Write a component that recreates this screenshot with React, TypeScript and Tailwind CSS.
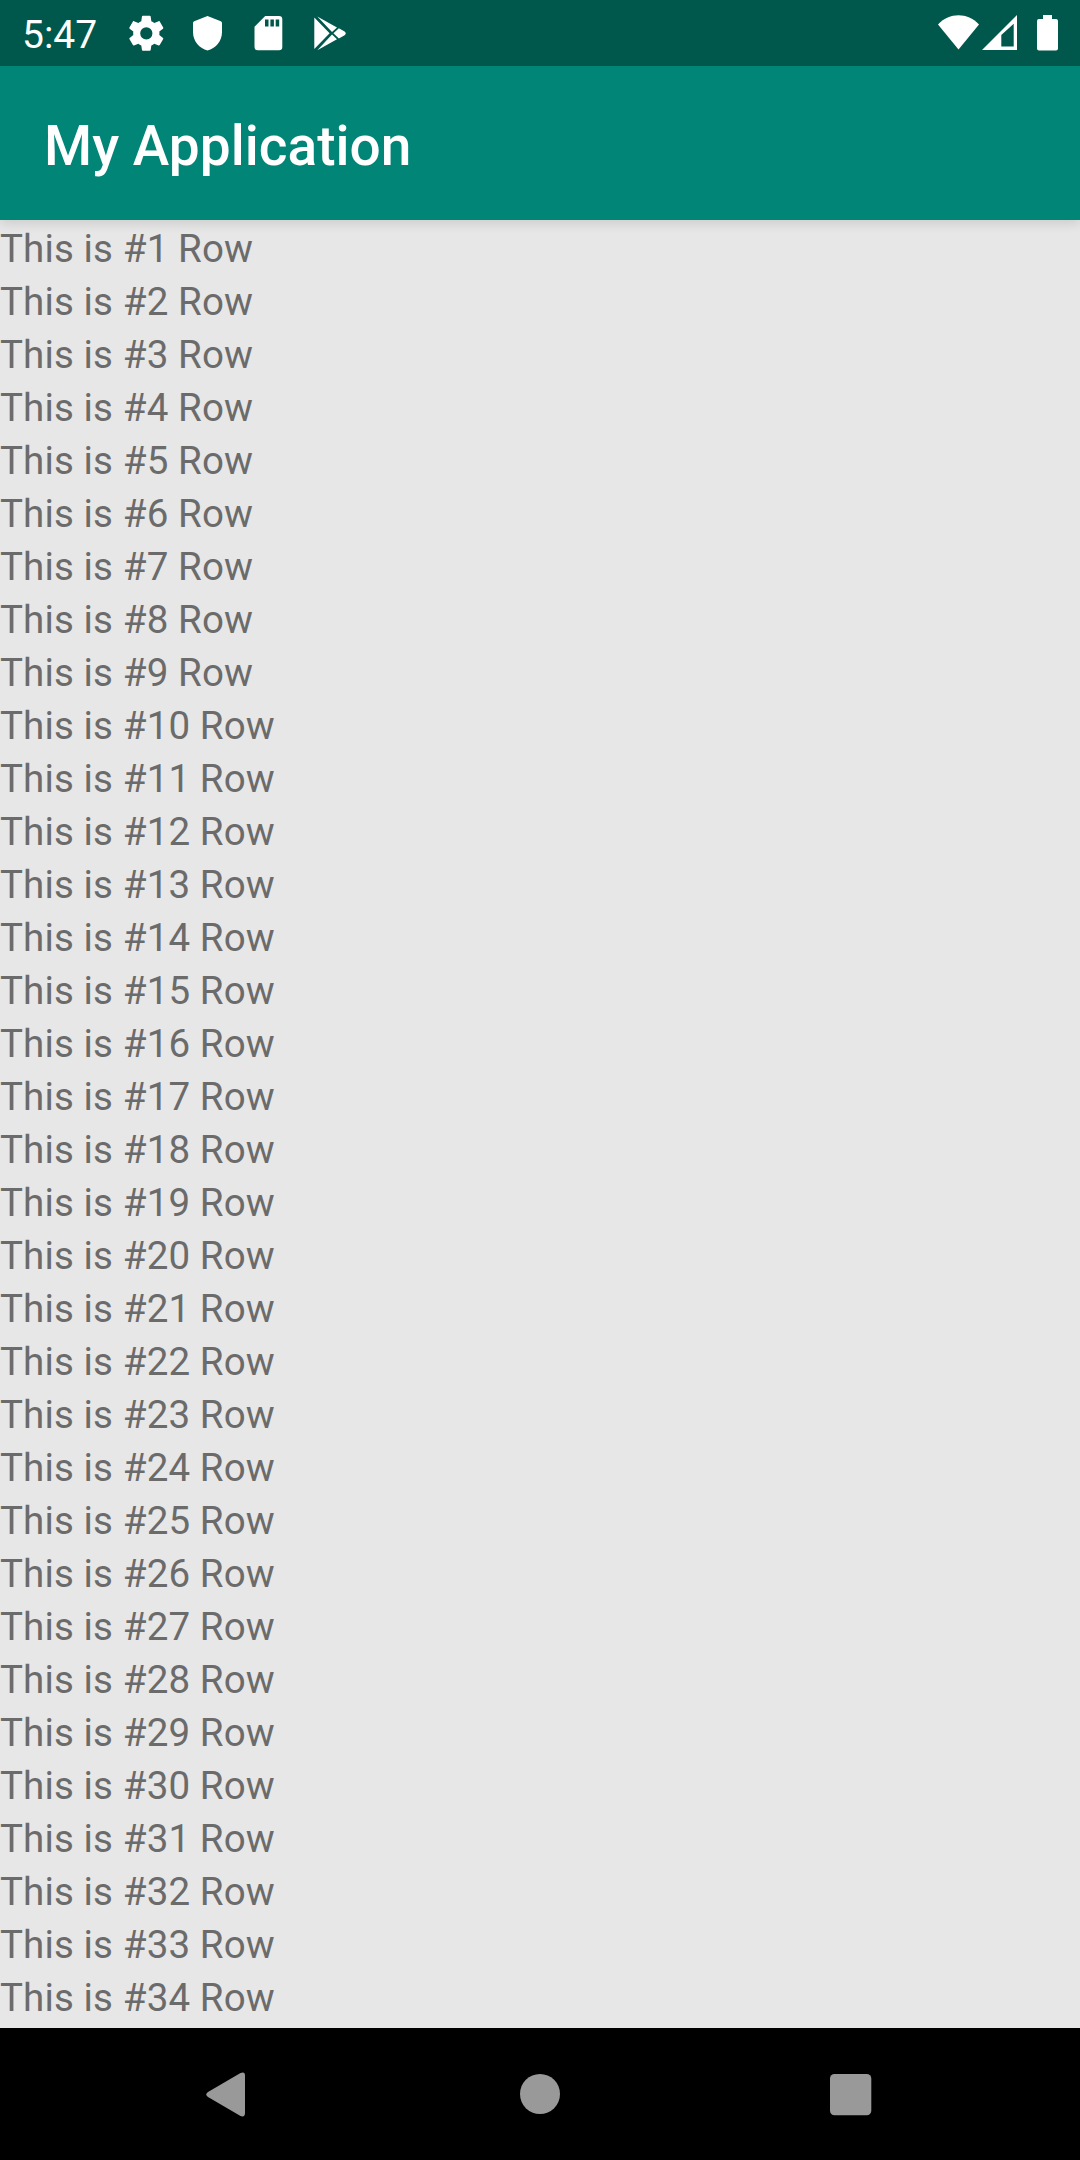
const rows = Array.from({ length: 34 }, (_, i) => i + 1);

function StatusBar() {
  return (
    <header className="z-20 flex h-[66px] shrink-0 items-center justify-between bg-[#00574b] pl-[22px] pr-[20px] text-white">
      <div className="flex items-center">
        <span className="w-[103px] pt-[4px] text-[39px] leading-[62px]">5:47</span>
        <div className="flex items-center gap-[19px]">
          <svg className="size-[42px]" viewBox="0 0 24 24" fill="currentColor">
            <path transform="translate(.18 .18)" d="M19.43 12.98c.04-.32.07-.64.07-.98s-.03-.66-.07-.98l2.11-1.65c.19-.15.24-.42.12-.64l-2-3.46c-.12-.22-.39-.3-.61-.22l-2.49 1c-.52-.4-1.08-.73-1.69-.98l-.38-2.65C14.46 2.18 14.25 2 14 2h-4c-.25 0-.46.18-.49.42l-.38 2.65c-.61.25-1.17.59-1.69.98l-2.49-1c-.23-.09-.49 0-.61.22l-2 3.46c-.13.22-.07.49.12.64l2.11 1.65c-.04.32-.07.65-.07.98s.03.66.07.98l-2.11 1.65c-.19.15-.24.42-.12.64l2 3.46c.12.22.39.3.61.22l2.49-1c.52.4 1.08.73 1.69.98l.38 2.65c.03.24.24.42.49.42h4c.25 0 .46-.18.49-.42l.38-2.65c.61-.25 1.17-.59 1.69-.98l2.49 1c.23.09.49 0 .61-.22l2-3.46c.12-.22.07-.49-.12-.64zM12 15.5a3.5 3.5 0 1 1 0-7 3.5 3.5 0 0 1 0 7z" />
          </svg>
          <svg className="size-[42px]" viewBox="0 0 42 42" fill="currentColor">
            <path d="M21.5 4 34.8 9.2Q36 9.7 36 11V20C36 29.5 29.5 36.5 21.5 38.5 13.5 36.5 7 29.5 7 20V11Q7 9.7 8.2 9.2Z" />
          </svg>
          <svg className="size-[42px]" viewBox="0 0 42 42" fill="currentColor" fillRule="evenodd">
            <path d="M18.2 4H32Q35.3 4 35.3 7.3V35Q35.3 38.3 32 38.3H10.8Q7.5 38.3 7.5 35V14.7ZM18 7.5V14.5H21.5V7.5ZM23.4 7.5V14.5H26.9V7.5ZM28.7 7.5V14.5H32.2V7.5Z" />
          </svg>
          <svg className="size-[42px]" viewBox="0 0 42 42" fill="currentColor">
            <path d="M6.3 5.6 21.6 21.3 6.3 37ZM9.3 4.4 29 15.4 24 20ZM9.3 38.2 29 27.2 24 22.6ZM25.4 21.3 30.9 16.2 36.6 19.4Q39 21.3 36.6 23.2L30.9 26.4Z" />
          </svg>
        </div>
      </div>
      <div className="flex items-center">
        <svg className="h-[42px] w-[44px]" viewBox="0 0 44 42" fill="currentColor">
          <path d="M2 12.5C8 6 15 3.3 22.5 3.3S37 6 43 12.5L22.5 37.5Z" />
        </svg>
        <svg className="h-[42px] w-[44px]" viewBox="0 0 44 42" fill="currentColor" fillRule="evenodd">
          <path d="M2 38 37 3V38ZM21.3 23V34.4H33.7V11.8Z" />
        </svg>
        <svg className="h-[42px] w-[36px]" viewBox="0 0 36 42" fill="currentColor">
          <path d="M19 3H28V7H32Q34 7 34 9V36.5Q34 38.5 32 38.5H15Q13 38.5 13 36.5V9Q13 7 15 7H19Z" />
        </svg>
      </div>
    </header>
  );
}

function NavigationBar() {
  return (
    <nav className="flex h-[132px] shrink-0 items-center justify-between bg-black px-[205px] text-[#999999]">
      <svg className="size-[48px]" viewBox="0 0 48 48" fill="currentColor">
        <path d="M35.5 3Q40 1 40 5.5V43Q40 47.5 35.5 46L3 27Q-.5 24.5 3 22Z" />
      </svg>
      <svg className="size-[48px]" viewBox="0 0 48 48" fill="currentColor">
        <circle cx="24" cy="24" r="20" />
      </svg>
      <svg className="size-[48px]" viewBox="0 0 48 48" fill="currentColor">
        <rect x="3" y="4" width="41.3" height="41.3" rx="4.5" />
      </svg>
    </nav>
  );
}

export default function App() {
  return (
    <div className="flex h-[2160px] w-[1080px] flex-col overflow-hidden bg-[#e7e7e7] font-[Roboto,sans-serif]">
      <StatusBar />
      <div className="z-10 flex h-[154px] shrink-0 items-center bg-[#008577] pl-[44px] pt-[7px] text-[55px] font-medium tracking-[0.03px] text-white shadow-[0_4px_10px_rgba(0,0,0,0.11)]">
        My Application
      </div>
      <main className="min-h-0 flex-1 overflow-hidden pt-[2px] text-[38.5px] leading-[53px] tracking-[0.13px] text-[#6b6b6b]">
        {rows.map((n) => (
          <div key={n}>This is #{n} Row</div>
        ))}
      </main>
      <NavigationBar />
    </div>
  );
}
